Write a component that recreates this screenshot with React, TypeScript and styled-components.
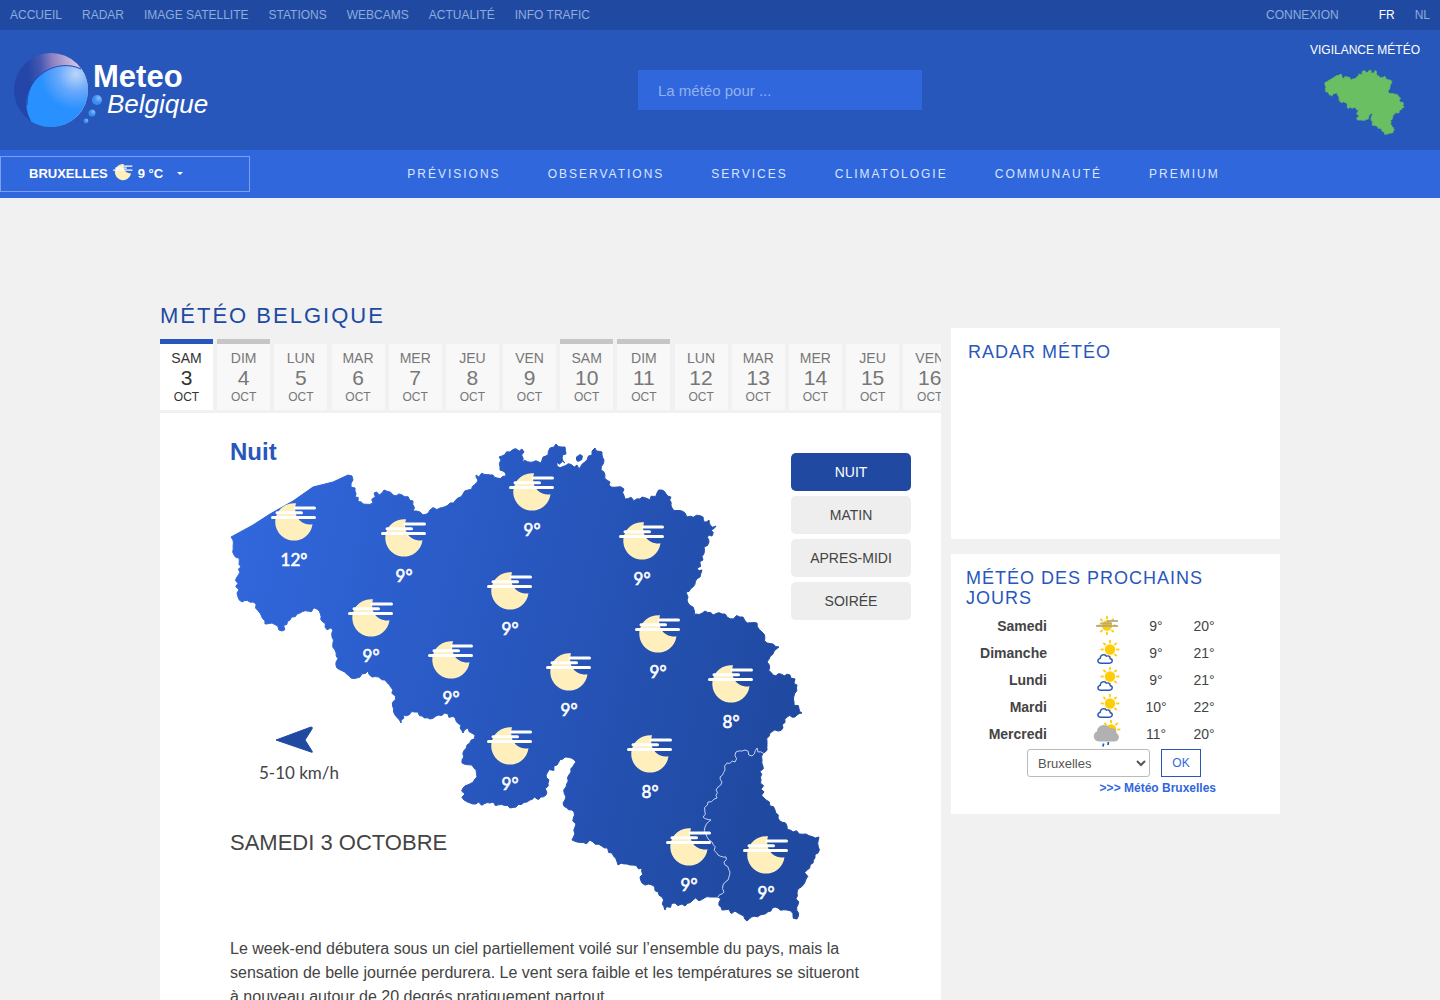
import React, { useState } from "react";
import styled, { createGlobalStyle } from "styled-components";

const GlobalStyle = createGlobalStyle`
  *, *::before, *::after { box-sizing: border-box; }
  body {
    margin: 0;
    background: #f1f1f1;
    color: #444;
    font-family: "Liberation Sans", Arial, sans-serif;
    font-size: 14px;
    line-height: 20px;
  }
  a { text-decoration: none; color: inherit; }
  button, input, select { font-family: inherit; }
`;

const HiddenLabel = styled.label`
  position: absolute;
  width: 1px;
  height: 1px;
  overflow: hidden;
  clip-path: inset(50%);
`;

/* ---------- header ---------- */

const TopBar = styled.div`
  display: flex;
  justify-content: space-between;
  align-items: center;
  height: 30px;
  padding: 0 10px;
  background: #204aa2;
  font-size: 12px;
`;

const TopLinks = styled.nav`
  display: flex;
  gap: 20px;
`;

const TopLink = styled.a<{ $active?: boolean }>`
  color: ${(p) => (p.$active ? "#fff" : "#8fabdc")};
`;

const LoginLink = styled(TopLink)`
  margin-right: 20px;
`;

const Banner = styled.header`
  display: grid;
  grid-template-columns: 260px 1fr 140px;
  height: 120px;
  background: #2857bb;
`;

const LogoLink = styled.a`
  align-self: center;
  padding: 2px 0 0 8px;
  svg { display: block; }
`;

const SearchForm = styled.form`
  align-self: center;
  justify-self: center;
`;

const SearchInput = styled.input`
  display: block;
  width: 284px;
  height: 40px;
  padding: 0 20px;
  border: 0;
  background: #3167dc;
  color: #fff;
  font-size: 15px;
  &::placeholder { color: #93b1f0; opacity: 1; }
`;

const Vigilance = styled.a`
  display: flex;
  flex-direction: column;
  align-items: center;
  gap: 9px;
  padding: 10px 10px 0 0;
  color: #fff;
  font-size: 12px;
`;

const NavBar = styled.div`
  display: flex;
  align-items: center;
  height: 48px;
  background: #3167dc;
`;

const CityButton = styled.button`
  display: flex;
  align-items: center;
  gap: 5px;
  flex: none;
  width: 250px;
  height: 36px;
  padding: 0 28px 2px;
  border: 1px solid #7aa0ee;
  background: transparent;
  color: #fff;
  font-size: 13px;
  font-weight: bold;
`;

const Caret = styled.span`
  margin-left: 9px;
  border: 3px solid transparent;
  border-top-color: #fff;
  border-bottom: 0;
`;

const MainMenu = styled.nav`
  display: flex;
  flex: 1;
  justify-content: center;
  gap: 47px;
  padding-right: 63px;
  color: #d9e5ff;
  font-size: 12px;
  letter-spacing: 2px;
`;

/* ---------- page ---------- */

const Page = styled.main`
  display: grid;
  grid-template-columns: minmax(0, 1fr) 329px;
  gap: 10px;
  max-width: 1120px;
  margin: 0 auto;
  padding-top: 106px;
`;

const PageTitle = styled.h1`
  margin: 0 0 11px;
  color: #204aa2;
  font-size: 22px;
  font-weight: normal;
  line-height: 24px;
  letter-spacing: 2px;
`;

const DayStrip = styled.nav`
  height: 74px;
  overflow: hidden;
  white-space: nowrap;
  font-size: 15px;
`;

const DayTab = styled.a<{ $active?: boolean; $weekend?: boolean }>`
  display: inline-block;
  width: 53px;
  height: 71px;
  padding-top: 4px;
  border-top: 5px solid ${(p) => (p.$active ? "#2857bb" : p.$weekend ? "#c6c6c6" : "transparent")};
  background: ${(p) => (p.$active ? "#fff" : "#f8f8f8")};
  background-clip: padding-box;
  color: ${(p) => (p.$active ? "#333" : "#777")};
  text-align: center;
  vertical-align: top;
`;

const TabName = styled.span`
  display: block;
  font-size: 14px;
`;

const TabNumber = styled.span`
  display: block;
  font-size: 21px;
`;

const TabMonth = styled.span`
  display: block;
  font-size: 12px;
  line-height: 18px;
`;

const Panel = styled.section`
  padding: 25px 30px 60px 70px;
  background: #fff;
`;

const Stage = styled.div`
  display: grid;
  grid-template-columns: 1fr 120px;
  align-items: start;
`;

const StageText = styled.div`
  grid-area: 1 / 1;
  display: flex;
  flex-direction: column;
  align-self: stretch;
  justify-content: space-between;
  padding-bottom: 67px;
`;

const PeriodTitle = styled.h2`
  margin: 0;
  color: #2857bb;
  font-size: 24px;
  line-height: 28px;
`;

const DateTitle = styled.h3`
  margin: 0;
  font-size: 22px;
  font-weight: normal;
  line-height: 28px;
`;

const MapHolder = styled.div`
  grid-area: 1 / 1 / 2 / 3;
  svg { display: block; }
`;

const Periods = styled.div`
  grid-area: 1 / 2;
  display: grid;
  gap: 5px;
  padding-top: 15px;
`;

const PeriodButton = styled.button<{ $active?: boolean }>`
  height: 38px;
  border: 0;
  border-radius: 5px;
  background: ${(p) => (p.$active ? "#204aa2" : "#eee")};
  color: ${(p) => (p.$active ? "#fff" : "#444")};
  font-size: 14px;
`;

const Report = styled.p`
  margin: 13px 40px 0 0;
  font-size: 16px;
  line-height: 24px;
`;

const Side = styled.aside`
  display: flex;
  flex-direction: column;
  gap: 15px;
  padding-top: 24px;
`;

const Card = styled.section<{ $minHeight: number }>`
  min-height: ${(p) => p.$minHeight}px;
  padding: 14px 15px;
  background: #fff;
`;

const CardTitle = styled.h2`
  margin: 0;
  color: #2857bb;
  font-size: 18px;
  font-weight: normal;
  letter-spacing: 1px;
`;

const RadarTitle = styled(CardTitle)`
  padding-left: 2px;
`;

const Forecast = styled.table`
  width: 262px;
  margin-top: 4px;
  border-collapse: collapse;
  table-layout: fixed;
  td, th { height: 27px; }
`;

const DayCell = styled.th`
  width: 115px;
  padding: 0 34px 0 0;
  text-align: right;
`;

const IconCell = styled.td`
  width: 51px;
  padding: 0;
  svg { display: block; margin: 0 auto; }
`;

const TempCell = styled.td`
  width: 48px;
  padding: 0;
  text-align: center;
`;

const CityForm = styled.form`
  display: flex;
  gap: 11px;
  margin: 2px 0 0 61px;
`;

const CitySelect = styled.select`
  width: 123px;
  height: 28px;
  padding: 0 6px;
  border: 1px solid #bbb;
  border-radius: 3px;
  background: #fff;
  color: #555;
  font-size: 13px;
`;

const OkButton = styled.button`
  width: 40px;
  height: 28px;
  padding: 0;
  border: 1px solid #2857bb;
  background: #fff;
  color: #3167dc;
  font-size: 12px;
`;

const CityLink = styled.a`
  display: block;
  margin-right: 49px;
  color: #3167dc;
  font-size: 12px;
  font-weight: bold;
  line-height: 22px;
  text-align: right;
`;

/* ---------- map geometry ---------- */

type Pt = [number, number];

const parse = (s: string): Pt[] => s.trim().split(/\s+/).map((p) => p.split(",").map(Number) as Pt);

const COAST = parse("231,537 253,525 270,514 293,501 313,487 333,482 348,475");

const NORTH_EAST = parse(`352,476 353,480 351,487 355,488 355,497 363,504 373,503 374,493 382,493
384,490 393,495 402,495 413,501 413,511 420,512 427,514 430,510 440,508 450,503 458,498 468,490 478,480
476,475 493,475 497,478 506,476 503,471 500,467 501,460 499,457 510,452 522,449 524,452 522,462 533,462
541,463 542,460 548,455 550,448 556,444 565,447 566,454 562,458 565,463 557,462 557,466 577,465 579,469
585,462 592,455 592,451 595,448 602,452 604,460 601,470 610,482 611,487 617,487 624,489 625,499 640,499
642,497 650,500 657,493 662,490 671,497 672,508 685,513 687,517 703,517 704,522 709,520 710,525 716,526
711,530 712,536 707,537 709,542 704,547 703,560 697,568 702,570 700,577 693,587 686,592 687,600 693,607
693,617 705,611 713,615 722,614 727,617 743,617 747,623 757,623 762,632 767,643 779,647 773,654 767,662
773,675 790,675 797,685 794,702 802,713 795,717 787,717 783,728 770,733 767,742 767,750 763,753`);

const BORDER = parse(`758,752 757,748 752,756 745,750 736,752 735,762 727,763 725,770 720,777 722,782 716,790 717,798
708,802 703,817 711,820 705,827 707,837 712,842 718,855 726,857 725,865 730,872 728,880 723,885 724,892 718,897`);

const SOUTH_WEST = parse(`710,897 693,900 685,906 675,903 665,910 662,897 652,885 642,883 640,877 642,868 630,865 618,865
612,853 593,842 577,842 572,840 575,827 574,812 563,803 566,787 571,772 576,762 565,757 557,765 546,775
548,783 546,795 527,802 510,808 490,803 473,804 464,800 463,788 477,777 472,765 462,763 467,745
475,735 468,728 463,733 461,725 448,714 430,719 415,712 403,715 401,723 395,715 393,690 385,680 372,677
368,671 360,677 351,678 337,668 335,650 332,637 333,630 325,627 317,609 300,613 290,620 282,631 272,623
265,624 260,613 253,602 242,602 237,593 237,577 241,567 239,558 234,555 233,540 231,537`);

const LUX_EAST = parse(`763,753 762,760 761,780 764,798 775,810 778,818 793,832 806,834 819,837 818,853 813,863 807,870
805,882 797,893 797,919 787,910 775,907 760,915 747,921 738,913 722,910 718,897`);

// Splits each segment in short steps and shifts them sideways so that borders look surveyed.
function roughen(points: Pt[], amount: number): Pt[] {
  let seed = 17;
  const random = () => {
    seed = (seed * 1103515245 + 12345) % 2147483648;
    return seed / 2147483648 - 0.5;
  };
  const out: Pt[] = [points[0]];
  for (let i = 1; i < points.length; i++) {
    const [ax, ay] = points[i - 1];
    const [bx, by] = points[i];
    const length = Math.hypot(bx - ax, by - ay);
    const steps = Math.max(1, Math.round(length / 3));
    for (let s = 1; s < steps; s++) {
      const t = s / steps;
      const shift = random() * amount;
      out.push([ax + (bx - ax) * t - ((by - ay) / length) * shift, ay + (by - ay) * t + ((bx - ax) / length) * shift]);
    }
    out.push([bx, by]);
  }
  return out;
}

const toPath = (points: Pt[]) => "M" + points.map(([x, y]) => `${x.toFixed(1)} ${y.toFixed(1)}`).join("L");

const borderLine = roughen([[763, 753], ...BORDER], 3);
const belgium = toPath([...COAST, ...roughen(NORTH_EAST, 4), ...borderLine, ...roughen(SOUTH_WEST, 4)]) + "Z";
const luxembourg = toPath([...roughen(LUX_EAST, 4), ...[...borderLine].reverse()]) + "Z";
const enclave = "M576 457L580 454L583 456L582 460L578 462L576 460Z";

interface Station { x: number; y: number; temp: number }

const STATIONS: Station[] = [
  { x: 294, y: 522, temp: 12 }, { x: 404, y: 538, temp: 9 }, { x: 532, y: 492, temp: 9 },
  { x: 642, y: 541, temp: 9 }, { x: 371, y: 618, temp: 9 }, { x: 510, y: 591, temp: 9 },
  { x: 451, y: 660, temp: 9 }, { x: 658, y: 634, temp: 9 }, { x: 569, y: 672, temp: 9 },
  { x: 731, y: 684, temp: 8 }, { x: 510, y: 746, temp: 9 }, { x: 650, y: 754, temp: 8 },
  { x: 689, y: 847, temp: 9 }, { x: 766, y: 855, temp: 9 },
];

const HazyMoon = () => (
  <g>
    <path d="M2 -18.7A18.7 18.7 0 1 0 18.5 2.3C9 4 -2 -4 2 -18.7Z" fill="#ffefbd" />
    <path d="M1 -14H20.5M-17 -9.3H7.5M-21.5 -4.6H20.5" stroke="#fff" strokeWidth="3" strokeLinecap="round" />
  </g>
);

const WeatherMap = () => (
  <svg width="592" height="486" viewBox="230 438 592 486" role="img" aria-label="Carte météo de la Belgique">
    <defs>
      <linearGradient id="land" gradientUnits="userSpaceOnUse" x1="231" y1="580" x2="770" y2="720">
        <stop offset="0" stopColor="#3167dc" />
        <stop offset="0.5" stopColor="#2857bf" />
        <stop offset="1" stopColor="#204aa2" />
      </linearGradient>
    </defs>
    <path d={belgium} fill="url(#land)" stroke="url(#land)" />
    <path d={enclave} fill="url(#land)" />
    <path d={luxembourg} fill="url(#land)" stroke="url(#land)" />
    <path d={toPath(borderLine)} fill="none" stroke="#c3d3f3" />
    {STATIONS.map((s) => (
      <g key={`${s.x}-${s.y}`} transform={`translate(${s.x} ${s.y})`}>
        <HazyMoon />
        <text y="44" fill="#fff" stroke="#fff" strokeWidth="0.6" fontFamily="Lato, sans-serif" fontSize="17" textAnchor="middle">{s.temp}°</text>
      </g>
    ))}
    <path d="M276 740L311 727Q313 727 312 729L305 740L312 751Q313 753 311 752Z" fill="#204aa2" stroke="#204aa2" />
    <text x="299" y="779" fill="#444" fontFamily="Lato, sans-serif" fontSize="17" textAnchor="middle">5-10 km/h</text>
  </svg>
);

const Logo = () => (
  <svg width="210" height="90" viewBox="8 46 210 90" role="img" aria-label="Meteo Belgique">
    <defs>
      <linearGradient id="globe" x1="0.1" y1="0.3" x2="1" y2="0.2">
        <stop offset="0.1" stopColor="#2346a8" />
        <stop offset="0.3" stopColor="#4457b2" />
        <stop offset="0.5" stopColor="#9184c4" />
        <stop offset="0.85" stopColor="#d5c6e6" />
      </linearGradient>
      <radialGradient id="lens" gradientUnits="userSpaceOnUse" cx="76" cy="74" r="36">
        <stop offset="0" stopColor="#bcd6fa" />
        <stop offset="0.5" stopColor="#66a8fb" />
        <stop offset="1" stopColor="#2890ff" />
      </radialGradient>
      <radialGradient id="drop" cx="0.7" cy="0.3" r="0.8">
        <stop offset="0" stopColor="#8abdfb" />
        <stop offset="0.6" stopColor="#3a8df5" />
      </radialGradient>
    </defs>
    <circle cx="51" cy="90" r="37" fill="url(#globe)" />
    <path d="M31 121C23 107 26 91 36 79C48 66 66 62 81 68A37.4 37.4 0 0 1 31 121.6Z" fill="url(#lens)" />
    <path d="M27 105C27 94 30 86 36 79C48 66 66 62 81 69" fill="none" stroke="#2149a8" />
    <circle cx="97" cy="100" r="5" fill="url(#drop)" />
    <circle cx="92" cy="113" r="3.5" fill="url(#drop)" />
    <circle cx="86" cy="121" r="2.4" fill="url(#drop)" />
    <text x="93" y="87" fill="#fff" fontFamily="Liberation Sans, Arial, sans-serif" fontSize="31" fontWeight="bold">Meteo</text>
    <text x="107" y="113" fill="#fff" fontFamily="Liberation Sans, Arial, sans-serif" fontSize="26" fontStyle="italic">Belgique</text>
  </svg>
);

/* ---------- small weather icons ---------- */

const Sun = ({ cx, cy }: { cx: number; cy: number }) => (
  <g transform={`translate(${cx} ${cy})`}>
    <circle r="5.2" fill="#ffcc08" />
    {[0, 45, 90, 135, 180, 225, 270, 315].map((angle) => (
      <path key={angle} d="M0 -6.2V-9.4" stroke="#ffcc08" strokeWidth="1.8" transform={`rotate(${angle})`} />
    ))}
  </g>
);

const ICONS = {
  haze: (
    <>
      <Sun cx={16} cy={13.5} />
      <path d="M16 9H27M9 11.5H21M5 14H27" stroke="#aaa08a" strokeOpacity="0.8" strokeWidth="1.8" />
    </>
  ),
  partial: (
    <>
      <Sun cx={19} cy={10.5} />
      <path d="M9.5 24.2H18.5C22 23.8 22 20.2 19.3 19.8C18.8 17 17 16.4 15.5 17.2C13.5 14.6 9.3 15.5 9.2 19.4C6 20.2 6.2 23.8 9.5 24.2Z" fill="#fff" stroke="#2857bb" strokeWidth="1.4" />
    </>
  ),
  rain: (
    <>
      <Sun cx={20} cy={9.5} />
      <path d="M8 21.5C1.5 21.5 1.5 12.5 6 11.5C6.500 4.500 15.500 2.800 19 8.500C24 7.500 26 10.500 25.300 13C29.500 15 28.500 21.500 23.500 21.500Z" fill="#b1b1b1" />
      <path d="M12.6 23.5L12 26.5M17.4 22L17 25" stroke="#2857bb" strokeWidth="1.7" />
    </>
  ),
};

const WeatherIcon = ({ kind }: { kind: keyof typeof ICONS }) => (
  <svg width="31" height="27" viewBox="0 0 31 27" aria-hidden="true">{ICONS[kind]}</svg>
);

/* ---------- data ---------- */

const TOP = ["ACCUEIL", "RADAR", "IMAGE SATELLITE", "STATIONS", "WEBCAMS", "ACTUALITÉ", "INFO TRAFIC"];
const MENU = ["PRÉVISIONS", "OBSERVATIONS", "SERVICES", "CLIMATOLOGIE", "COMMUNAUTÉ", "PREMIUM"];
const WEEK = ["SAM", "DIM", "LUN", "MAR", "MER", "JEU", "VEN"];
const DAYS = Array.from({ length: 14 }, (_, i) => ({ name: WEEK[i % 7], number: i + 3, weekend: i % 7 < 2 }));
const PERIODS = ["NUIT", "MATIN", "APRES-MIDI", "SOIRÉE"];
const NEXT_DAYS: { day: string; icon: keyof typeof ICONS; min: number; max: number }[] = [
  { day: "Samedi", icon: "haze", min: 9, max: 20 },
  { day: "Dimanche", icon: "partial", min: 9, max: 21 },
  { day: "Lundi", icon: "partial", min: 9, max: 21 },
  { day: "Mardi", icon: "partial", min: 10, max: 22 },
  { day: "Mercredi", icon: "rain", min: 11, max: 20 },
];

export default function App() {
  const [period, setPeriod] = useState("NUIT");
  return (
    <>
      <GlobalStyle />
      <TopBar>
        <TopLinks>
          {TOP.map((label) => <TopLink key={label} href="#">{label}</TopLink>)}
        </TopLinks>
        <TopLinks>
          <LoginLink href="#">CONNEXION</LoginLink>
          <TopLink href="#" $active>FR</TopLink>
          <TopLink href="#">NL</TopLink>
        </TopLinks>
      </TopBar>
      <Banner>
        <LogoLink href="#"><Logo /></LogoLink>
        <SearchForm>
          <HiddenLabel htmlFor="search">Rechercher une ville</HiddenLabel>
          <SearchInput id="search" placeholder="La météo pour ..." />
        </SearchForm>
        <Vigilance href="#">
          VIGILANCE MÉTÉO
          <svg width="82" height="68" viewBox="226 437 590 489" aria-hidden="true">
            <path d={belgium} fill="#6abf62" stroke="#6abf62" strokeWidth="6" />
          </svg>
        </Vigilance>
      </Banner>
      <NavBar>
        <CityButton type="button">
          BRUXELLES
          <svg width="20" height="20" viewBox="-23 -21 46 46" aria-hidden="true"><HazyMoon /></svg>
          9 °C
          <Caret />
        </CityButton>
        <MainMenu>
          {MENU.map((label) => <a key={label} href="#">{label}</a>)}
        </MainMenu>
      </NavBar>
      <Page>
        <div>
          <PageTitle>MÉTÉO BELGIQUE</PageTitle>
          <DayStrip>
            {DAYS.map((d, i) => (
              <React.Fragment key={d.number}>
                <DayTab href="#" $active={i === 0} $weekend={d.weekend}>
                  <TabName>{d.name}</TabName>
                  <TabNumber>{d.number}</TabNumber>
                  <TabMonth>OCT</TabMonth>
                </DayTab>{" "}
              </React.Fragment>
            ))}
          </DayStrip>
          <Panel>
            <Stage>
              <MapHolder><WeatherMap /></MapHolder>
              <StageText>
                <PeriodTitle>Nuit</PeriodTitle>
                <DateTitle>SAMEDI 3 OCTOBRE</DateTitle>
              </StageText>
              <Periods>
                {PERIODS.map((p) => (
                  <PeriodButton key={p} type="button" $active={p === period} onClick={() => setPeriod(p)}>{p}</PeriodButton>
                ))}
              </Periods>
            </Stage>
            <Report>
              Le week-end débutera sous un ciel partiellement voilé sur l’ensemble du pays, mais la sensation de belle
              journée perdurera. Le vent sera faible et les températures se situeront à nouveau autour de 20 degrés
              pratiquement partout.
            </Report>
          </Panel>
        </div>
        <Side>
          <Card $minHeight={211}>
            <RadarTitle>RADAR MÉTÉO</RadarTitle>
          </Card>
          <Card $minHeight={260}>
            <CardTitle>MÉTÉO DES PROCHAINS JOURS</CardTitle>
            <Forecast>
              <tbody>
                {NEXT_DAYS.map((d) => (
                  <tr key={d.day}>
                    <DayCell scope="row">{d.day}</DayCell>
                    <IconCell><WeatherIcon kind={d.icon} /></IconCell>
                    <TempCell>{d.min}°</TempCell>
                    <TempCell>{d.max}°</TempCell>
                  </tr>
                ))}
              </tbody>
            </Forecast>
            <CityForm>
              <HiddenLabel htmlFor="city">Ville</HiddenLabel>
              <CitySelect id="city" defaultValue="Bruxelles">
                <option>Bruxelles</option>
              </CitySelect>
              <OkButton type="button">OK</OkButton>
            </CityForm>
            <CityLink href="#">&gt;&gt;&gt; Météo Bruxelles</CityLink>
          </Card>
        </Side>
      </Page>
    </>
  );
}
